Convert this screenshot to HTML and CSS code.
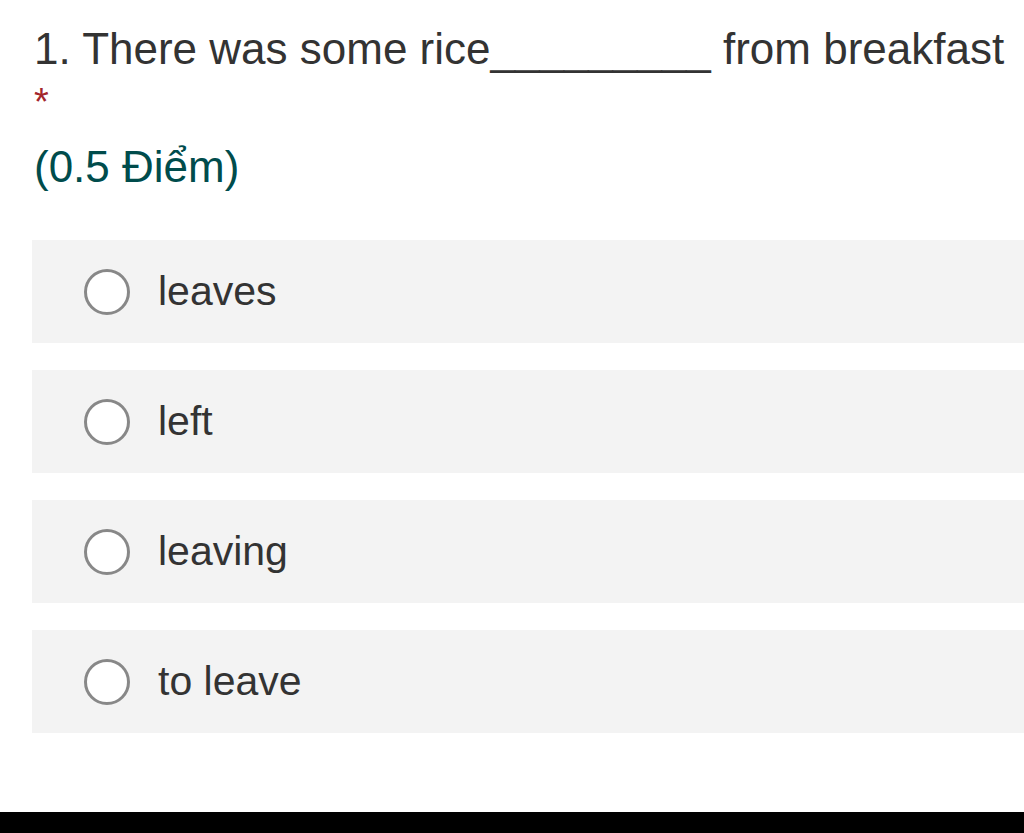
FILE: index.html
```html
<!DOCTYPE html>
<html lang="vi">
<head>
<meta charset="utf-8">
<title>Question 1</title>
<link rel="stylesheet" href="styles.css">
</head>
<body>
<div class="page">
  <main class="question">
    <div class="title">1. There was some rice_________ from breakfast</div>
    <div class="required">*</div>
    <div class="points">(0.5 Điểm)</div>
    <div class="options">
      <label class="option"><span class="radio"></span><span class="label">leaves</span></label>
      <label class="option"><span class="radio"></span><span class="label">left</span></label>
      <label class="option"><span class="radio"></span><span class="label">leaving</span></label>
      <label class="option"><span class="radio"></span><span class="label">to leave</span></label>
    </div>
  </main>
  <footer class="bar"></footer>
</div>
</body>
</html>
```

FILE: styles.css
```css
html, body {
  margin: 0;
  padding: 0;
  background: #ffffff;
}
.page {
  height: 833px;
  display: flex;
  flex-direction: column;
  overflow: hidden;
  font-family: "Liberation Sans", Arial, sans-serif;
}
.question {
  flex: 1;
  padding-left: 32px;
}
.title {
  margin: 24px 0 0 2px;
  font-size: 44px;
  line-height: 50px;
  color: #333333;
  white-space: nowrap;
}
.required {
  margin: 9px 0 0 2px;
  font-size: 38px;
  line-height: 38px;
  height: 30px;
  color: #a4262c;
}
.points {
  margin: 29px 0 0 2px;
  font-size: 44px;
  line-height: 50px;
  color: #004c4c;
}
.options {
  margin-top: 48px;
  display: flex;
  flex-direction: column;
  gap: 27px;
}
.option {
  display: flex;
  align-items: center;
  height: 103px;
  width: 1000px;
  background: #f3f3f3;
  padding-left: 52px;
  box-sizing: border-box;
}
.radio {
  width: 46px;
  height: 46px;
  box-sizing: border-box;
  border: 3.5px solid #888888;
  border-radius: 50%;
  background: #ffffff;
  flex: none;
}
.label {
  margin-left: 28px;
  font-size: 41px;
  color: #333333;
}
.bar {
  height: 21px;
  background: #000000;
  flex: none;
}
```
